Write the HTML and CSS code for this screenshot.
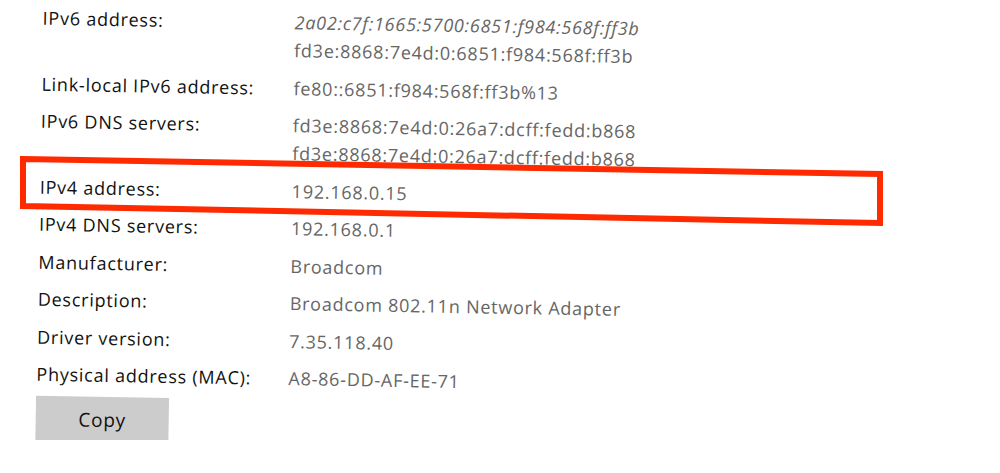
FILE: index.html
```html
<!DOCTYPE html>
<html lang="en">
<head>
    <meta charset="UTF-8">
    <meta name="viewport" content="width=device-width, initial-scale=1.0">
    <title>Network properties</title>
    <link rel="stylesheet" href="styles.css">
</head>
<body>
    <div class="panel">
        <div class="details">
            <div class="label">IPv6 address:</div>
            <div class="value">
                <div class="italic">2a02:c7f:1665:5700:6851:f984:568f:ff3b</div>
                <div>fd3e:8868:7e4d:0:6851:f984:568f:ff3b</div>
            </div>

            <div class="label">Link-local IPv6 address:</div>
            <div class="value">fe80::6851:f984:568f:ff3b%13</div>

            <div class="label">IPv6 DNS servers:</div>
            <div class="value">
                <div>fd3e:8868:7e4d:0:26a7:dcff:fedd:b868</div>
                <div>fd3e:8868:7e4d:0:26a7:dcff:fedd:b868</div>
            </div>

            <div class="label">IPv4 address:</div>
            <div class="value">192.168.0.15</div>

            <div class="label">IPv4 DNS servers:</div>
            <div class="value">192.168.0.1</div>

            <div class="label">Manufacturer:</div>
            <div class="value">Broadcom</div>

            <div class="label">Description:</div>
            <div class="value">Broadcom 802.11n Network Adapter</div>

            <div class="label">Driver version:</div>
            <div class="value">7.35.118.40</div>

            <div class="label">Physical address (MAC):</div>
            <div class="value">A8-86-DD-AF-EE-71</div>
        </div>

        <button class="copy-btn">Copy</button>
    </div>

    <!-- hand-drawn highlight round the IPv4 row -->
    <svg class="highlight" width="1000" height="473" viewBox="0 0 1000 473">
        <polygon points="23,159 880,174 880,223 23,206" fill="none" stroke="#ff2a00" stroke-width="6" stroke-linejoin="miter"/>
    </svg>
</body>
</html>
```

FILE: styles.css
```css
body {
    margin: 0;
    background: #fff;
    font-family: "Open Sans", "Noto Sans", Arial, sans-serif;
    font-size: 18px;
    letter-spacing: 0.75px;
    overflow: hidden;
}
.panel {
    padding: 3px 0 0 43px;
    transform: rotate(1deg);
    transform-origin: 0 0;
}
.details {
    display: grid;
    grid-template-columns: 252px auto;
    row-gap: 9.5px;
    line-height: 28px;
}
.label {
    color: #111;
}
.value {
    color: #666;
}
.italic {
    font-style: italic;
}
.copy-btn {
    display: block;
    margin-top: 8px;
    width: 133px;
    height: 45px;
    border: none;
    background-color: #cccccc;
    color: #111;
    font-family: inherit;
    font-size: 19px;
    letter-spacing: 0.75px;
    padding: 0;
}
.highlight {
    position: absolute;
    top: 0;
    left: 0;
    pointer-events: none;
}
```
